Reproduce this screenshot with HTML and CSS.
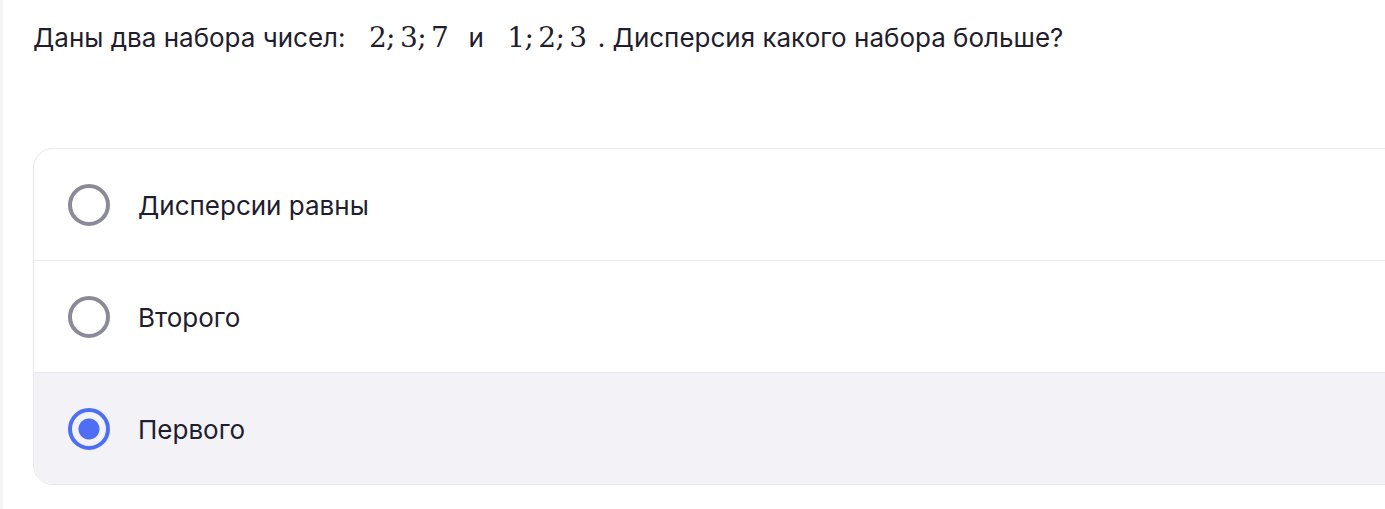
FILE: index.html
```html
<!DOCTYPE html>
<html>
<head>
    <title>Дисперсия</title>
    <link rel="stylesheet" href="styles.css">
</head>
<body>
    <div class="page">
        <aside class="sidebar"></aside>
        <main class="content">
            <p class="question">
                Даны два набора чисел:
                <span class="math">2;&#8201;3;&#8201;7</span>
                и
                <span class="math">1;&#8201;2;&#8201;3</span>
                <span class="dot">. Дисперсия какого набора больше?</span>
            </p>

            <div class="options">
                <label class="option">
                    <span class="radio"></span>
                    <span class="optionText">Дисперсии равны</span>
                </label>
                <label class="option">
                    <span class="radio"></span>
                    <span class="optionText">Второго</span>
                </label>
                <label class="option selected">
                    <span class="radio"></span>
                    <span class="optionText">Первого</span>
                </label>
            </div>
        </main>
    </div>
</body>
</html>
```

FILE: styles.css
```css
body {
    margin: 0;
    overflow: hidden;
    background: #ffffff;
    font-family: Inter, "Noto Sans", sans-serif;
    color: #1f1d2e;
}
.page {
    display: flex;
    min-height: 509px;
}
.sidebar {
    width: 3px;
    flex-shrink: 0;
    background: #f3f3f8;
}
.content {
    flex: 1;
    padding-left: 30px;
    min-width: 0;
}
.question {
    margin: 0;
    padding-top: 20px;
    font-size: 26px;
    line-height: 36px;
    white-space: nowrap;
}
.math {
    font-family: "DejaVu Serif", "Liberation Serif", serif;
    font-size: 28px;
    margin: 0 13px 0 16px;
    letter-spacing: -0.6px;
}
.dot {
    margin-left: -9px;
}
.options {
    margin-top: 92px;
    width: calc(100% + 40px);
    border: 1px solid #e8e8ef;
    border-radius: 20px;
    overflow: hidden;
}
.option {
    display: flex;
    align-items: center;
    height: 111px;
    padding-left: 34px;
    border-top: 1px solid #e8e8ef;
    cursor: pointer;
}
.option:first-child {
    border-top: none;
}
.option.selected {
    background: #f2f2f7;
}
.radio {
    box-sizing: border-box;
    width: 42px;
    height: 42px;
    border: 4px solid #8b8a9b;
    border-radius: 50%;
    flex-shrink: 0;
    margin-right: 28px;
}
.selected .radio {
    border-color: #4e6ef5;
    background: radial-gradient(circle, #4e6ef5 0 10px, transparent 11px);
}
.optionText {
    font-size: 26px;
    line-height: 34px;
    padding-top: 3px;
}
```
